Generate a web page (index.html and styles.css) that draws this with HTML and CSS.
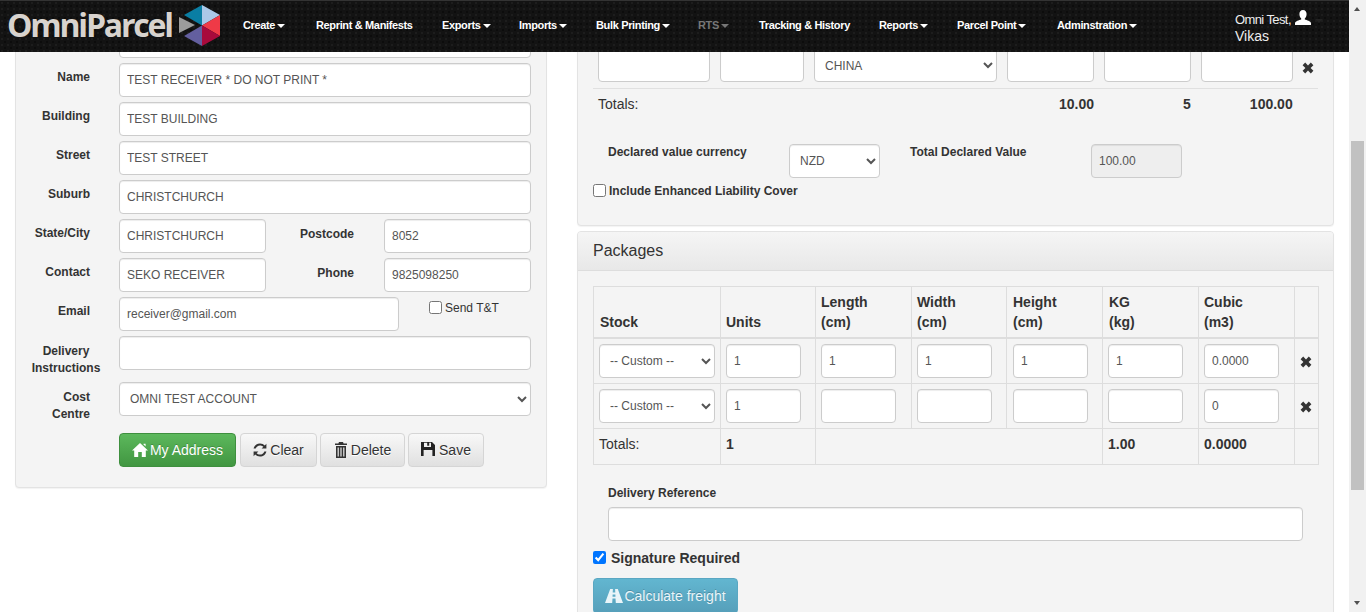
FILE: index.html
```html
<!DOCTYPE html>
<html lang="en">
<head>
<meta charset="utf-8">
<title>OmniParcel</title>
<link rel="stylesheet" href="styles.css">
</head>
<body>
<svg class="defs" width="0" height="0">
  <defs>
    <symbol id="i-home" viewBox="0 0 16 14"><path d="M8 0 L16 7.6 L13.8 7.6 L13.8 14 L9.8 14 L9.8 9 L6.2 9 L6.2 14 L2.2 14 L2.2 7.6 L0 7.6 Z M11.5 0.8 H13.6 V3.4 L11.5 1.6 Z"/></symbol>
    <symbol id="i-refresh" viewBox="0 0 14 14"><path d="M7 0.4 C9 0.4 10.6 1.2 11.8 2.4 L13.4 0.8 V5.6 H8.6 L10.4 3.8 C9.6 3 8.4 2.4 7 2.4 C5 2.4 3.2 3.8 2.7 5.6 H0.6 C1.2 2.6 3.8 0.4 7 0.4 Z M0.6 8.4 H5.4 L3.6 10.2 C4.4 11 5.6 11.6 7 11.6 C9 11.6 10.8 10.2 11.3 8.4 H13.4 C12.8 11.4 10.2 13.6 7 13.6 C5 13.6 3.4 12.8 2.2 11.6 L0.6 13.2 Z"/></symbol>
    <symbol id="i-trash" viewBox="0 0 14 16"><path d="M5 0 H9 L9.6 1.4 H13 V3 H1 V1.4 H4.4 Z M2 4 H12 V16 H2 Z M3.6 5.4 V14.6 H4.8 V5.4 Z M6.4 5.4 V14.6 H7.6 V5.4 Z M9.2 5.4 V14.6 H10.4 V5.4 Z" fill-rule="evenodd"/></symbol>
    <symbol id="i-save" viewBox="0 0 14 14"><path d="M0 0 H11 L14 3 V14 H0 Z M3 0.8 V5 H10 V0.8 H8.2 V3.8 H6.2 V0.8 Z M2.6 8 V14 H11.4 V8 Z" fill-rule="evenodd"/></symbol>
    <symbol id="i-road" viewBox="0 0 18 14"><path d="M5.2 0 H7.9 L7.7 3.6 H10.3 L10.1 0 H12.8 L18 14 H10.8 L10.5 9.4 H7.5 L7.2 14 H0 Z M7.6 5.4 L7.55 7.8 H10.45 L10.4 5.4 Z" fill-rule="evenodd"/></symbol>
    <symbol id="i-user" viewBox="0 0 16 15"><path d="M8 0 C10.4 0 11.6 1.8 11.6 4 C11.6 6 10.8 7.6 9.8 8.6 V9.6 C12 10.4 15.4 11 16 13 V15 H0 V13 C0.6 11 4 10.4 6.2 9.6 V8.6 C5.2 7.6 4.4 6 4.4 4 C4.4 1.8 5.6 0 8 0 Z"/></symbol>
    <symbol id="i-x" viewBox="0 0 12 12"><path d="M3.2 0.6 L6 3.4 L8.8 0.6 L11.4 3.2 L8.6 6 L11.4 8.8 L8.8 11.4 L6 8.6 L3.2 11.4 L0.6 8.8 L3.4 6 L0.6 3.2 Z"/></symbol>
  </defs>
</svg>

<header class="topbar">
  <a class="brand">
    <span class="brand-text">OmniParcel</span>
    <svg class="brand-mark" width="43" height="41" viewBox="0 0 43 41">
      <polygon points="24,0 42,10 24,20.500" fill="#aac8e8"/>
      <polygon points="24,0 6,10 24,20.500" fill="#0a7ea4"/>
      <polygon points="42,10 42,31 24,20.500" fill="#ef3a47"/>
      <polygon points="42,31 24,41 24,20.500" fill="#a80a3c"/>
      <polygon points="24,41 6,31 24,20.500" fill="#635f9f"/>
      <polygon points="1,12 1,28 17,20" fill="#9c9c9c"/>
    </svg>
  </a>
  <nav class="nav">
    <a class="nav-item nav-create">Create<i class="caret"></i></a>
    <a class="nav-item nav-reprint">Reprint &amp; Manifests</a>
    <a class="nav-item nav-exports">Exports<i class="caret"></i></a>
    <a class="nav-item nav-imports">Imports<i class="caret"></i></a>
    <a class="nav-item nav-bulk">Bulk Printing<i class="caret"></i></a>
    <a class="nav-item nav-rts is-muted">RTS<i class="caret"></i></a>
    <a class="nav-item nav-track">Tracking &amp; History</a>
    <a class="nav-item nav-reports">Reports<i class="caret"></i></a>
    <a class="nav-item nav-parcel">Parcel Point<i class="caret"></i></a>
    <a class="nav-item nav-admin">Adminstration<i class="caret"></i></a>
  </nav>
  <div class="user"><span class="user-org">Omni Test,</span> <svg class="ico ico-user"><use href="#i-user"/></svg><i class="caret caret-dark"></i><br>Vikas</div>
</header>

<main class="page">
  <section class="col-left">
    <div class="panel panel-address">
      <div class="row"><label class="lbl"></label><input class="ctl ctl-full" type="text"></div>
      <div class="row"><label class="lbl">Name</label><input class="ctl ctl-full" type="text" value="TEST RECEIVER * DO NOT PRINT *"></div>
      <div class="row"><label class="lbl">Building</label><input class="ctl ctl-full" type="text" value="TEST BUILDING"></div>
      <div class="row"><label class="lbl">Street</label><input class="ctl ctl-full" type="text" value="TEST STREET"></div>
      <div class="row"><label class="lbl">Suburb</label><input class="ctl ctl-full" type="text" value="CHRISTCHURCH"></div>
      <div class="row"><label class="lbl">State/City</label><input class="ctl ctl-half" type="text" value="CHRISTCHURCH"><label class="lbl lbl-mid">Postcode</label><input class="ctl ctl-half" type="text" value="8052"></div>
      <div class="row"><label class="lbl">Contact</label><input class="ctl ctl-half" type="text" value="SEKO RECEIVER"><label class="lbl lbl-mid">Phone</label><input class="ctl ctl-half" type="text" value="9825098250"></div>
      <div class="row row-email"><label class="lbl">Email</label><input class="ctl ctl-email" type="text" value="receiver@gmail.com"><label class="send"><input class="check" type="checkbox">Send T&amp;T</label></div>
      <div class="row row-instr"><label class="lbl lbl-center">Delivery Instructions</label><input class="ctl ctl-full" type="text"></div>
      <div class="row row-cost"><label class="lbl lbl-cost">Cost<br>Centre</label><select class="ctl ctl-full ctl-select"><option>OMNI TEST ACCOUNT</option></select></div>
      <div class="actions">
        <button class="btn btn-green btn-myaddr" type="button"><svg class="ico ico-home"><use href="#i-home"/></svg>My Address</button>
        <button class="btn btn-plain btn-clear" type="button"><svg class="ico ico-refresh"><use href="#i-refresh"/></svg>Clear</button>
        <button class="btn btn-plain btn-delete" type="button"><svg class="ico ico-trash"><use href="#i-trash"/></svg>Delete</button>
        <button class="btn btn-plain btn-save" type="button"><svg class="ico ico-save"><use href="#i-save"/></svg>Save</button>
      </div>
    </div>
  </section>

  <section class="col-right">
    <div class="panel panel-goods">
      <div class="goods-row">
        <input class="ctl g1" type="text">
        <input class="ctl g2" type="text">
        <select class="ctl ctl-select g3"><option>CHINA</option></select>
        <input class="ctl g4" type="text">
        <input class="ctl g5" type="text">
        <input class="ctl g6" type="text">
        <svg class="ico ico-x"><use href="#i-x"/></svg>
      </div>
      <div class="goods-totals">
        <span class="gt-label">Totals:</span>
        <b class="gt-a">10.00</b>
        <b class="gt-b">5</b>
        <b class="gt-c">100.00</b>
      </div>
      <div class="declared">
        <label class="lbl-plain dv-label">Declared value currency</label>
        <select class="ctl ctl-select dv-select"><option>NZD</option></select>
        <label class="lbl-plain dv-total">Total Declared Value</label>
        <input class="ctl dv-input" type="text" value="100.00" disabled>
      </div>
      <label class="cover"><input class="check" type="checkbox">Include Enhanced Liability Cover</label>
    </div>

    <div class="panel panel-packages">
      <h2 class="panel-title">Packages</h2>
      <div class="panel-body">
        <table class="pkg">
          <colgroup>
            <col class="c-stock"><col class="c-95"><col class="c-96"><col class="c-95"><col class="c-96"><col class="c-96"><col class="c-96"><col class="c-x">
          </colgroup>
          <thead>
            <tr><th>Stock</th><th>Units</th><th>Length<br>(cm)</th><th>Width<br>(cm)</th><th class="th-height">Height<br>(cm)</th><th class="th-kg">KG<br>(kg)</th><th>Cubic<br>(m3)</th><th></th></tr>
          </thead>
          <tbody>
            <tr>
              <td><select class="ctl ctl-select cell-select"><option>-- Custom --</option></select></td>
              <td><input class="ctl cell-input" type="text" value="1"></td>
              <td><input class="ctl cell-input" type="text" value="1"></td>
              <td><input class="ctl cell-input" type="text" value="1"></td>
              <td class="td-height"><input class="ctl cell-input" type="text" value="1"></td>
              <td><input class="ctl cell-input" type="text" value="1"></td>
              <td><input class="ctl cell-input" type="text" value="0.0000"></td>
              <td class="cell-x"><svg class="ico ico-x"><use href="#i-x"/></svg></td>
            </tr>
            <tr>
              <td><select class="ctl ctl-select cell-select"><option>-- Custom --</option></select></td>
              <td><input class="ctl cell-input" type="text" value="1"></td>
              <td><input class="ctl cell-input" type="text"></td>
              <td><input class="ctl cell-input" type="text"></td>
              <td class="td-height"><input class="ctl cell-input" type="text"></td>
              <td><input class="ctl cell-input" type="text"></td>
              <td><input class="ctl cell-input" type="text" value="0"></td>
              <td class="cell-x"><svg class="ico ico-x"><use href="#i-x"/></svg></td>
            </tr>
            <tr class="totals">
              <td>Totals:</td><td><b>1</b></td><td colspan="3"></td><td><b>1.00</b></td><td><b>0.0000</b></td><td></td>
            </tr>
          </tbody>
        </table>
        <div class="ref">
          <label class="lbl-plain ref-label">Delivery Reference</label>
          <input class="ctl ref-input" type="text">
        </div>
        <label class="sig"><input class="check" type="checkbox" checked>Signature Required</label>
        <button class="btn btn-info" type="button"><svg class="ico ico-road"><use href="#i-road"/></svg>Calculate freight</button>
      </div>
    </div>
  </section>
</main>

<div class="scrollbar">
  <i class="sb-up"></i>
  <i class="sb-thumb"></i>
  <i class="sb-down"></i>
</div>
</body>
</html>
```
FILE: styles.css
```css
* { box-sizing: border-box; }
html, body { margin: 0; height: 100%; overflow: hidden; }
body {
  font-family: "Liberation Sans", Arial, sans-serif;
  font-size: 14px;
  line-height: 20px;
  color: #333;
  background: #fff;
}
.defs { position: absolute; }

/* top bar */
.topbar {
  position: fixed;
  left: 0; top: 0;
  width: 1349px;
  height: 52px;
  z-index: 5;
  background-color: #131313;
  background-image:
    radial-gradient(circle at 2px 2px, #1d1d1d 1px, transparent 1.4px),
    radial-gradient(circle at 5px 5px, #0c0c0c 1.2px, transparent 1.6px);
  background-size: 6px 6px;
  border-top: 1px solid #333;
  display: flex;
  align-items: flex-start;
}
.brand { display: flex; align-items: flex-start; width: 243px; height: 51px; padding-left: 7px; flex: none; }
.brand-text {
  font-family: "Open Sans", sans-serif;
  font-weight: 700;
  font-size: 32px;
  line-height: 47px;
  color: #d8d3ce;
  letter-spacing: -2.2px;
  width: 171px;
  flex: none;
  white-space: nowrap;
}
.brand-mark { flex: none; margin-top: 4px; }
.nav { display: flex; height: 47px; align-items: center; flex: none; width: 992px; }
.nav-item {
  font-size: 11px;
  font-weight: 700;
  letter-spacing: -.35px;
  color: #fff;
  white-space: nowrap;
  flex: none;
}
.nav-create { width: 73px; }
.nav-reprint { width: 126px; }
.nav-exports { width: 77px; }
.nav-imports { width: 77px; }
.nav-bulk { width: 102px; }
.nav-rts { width: 61px; }
.nav-track { width: 120px; }
.nav-reports { width: 78px; }
.nav-parcel { width: 100px; }
.is-muted { color: #777; }
.caret {
  display: inline-block;
  width: 0; height: 0;
  margin-left: 2px;
  vertical-align: 1px;
  border-top: 4px solid currentColor;
  border-left: 4px solid transparent;
  border-right: 4px solid transparent;
}
.caret-dark { color: #222; margin-left: 4px; }
.user { color: #eee; font-size: 14px; line-height: 16px; padding-top: 10px; white-space: nowrap; }
.user-org { font-size: 13px; letter-spacing: -.6px; }
.ico-user { width: 16px; height: 15px; fill: #fff; vertical-align: -1px; margin-top: -6px; }
.ico { display: inline-block; }

/* page */
.page { display: flex; align-items: flex-start; width: 1349px; height: 612px; overflow: hidden; padding-left: 15px; }
.col-left { width: 532px; flex: none; }
.col-right { width: 757px; flex: none; margin-left: 30px; }
.panel {
  background: #f4f4f4;
  border: 1px solid #e3e3e3;
  border-radius: 4px;
  box-shadow: 0 1px 1px rgba(0,0,0,.05);
}

/* address form */
.panel-address { height: 488px; padding: 23px 15px 0 0; }
.row { display: flex; align-items: flex-start; margin-bottom: 5px; height: 34px; }
.lbl {
  width: 74px;
  margin-right: 29px;
  flex: none;
  text-align: right;
  font-size: 12px;
  font-weight: 700;
  line-height: 17px;
  padding-top: 6px;
}
.lbl-mid { width: 88px; margin-right: 30px; padding-top: 7px; }
.ctl {
  height: 34px;
  padding: 5px 7px 6px;
  border: 1px solid #ccc;
  border-radius: 4px;
  background: #fff;
  color: #555;
  font-family: "Liberation Sans", Arial, sans-serif;
  font-size: 12px;
  line-height: 20px;
  box-shadow: inset 0 1px 1px rgba(0,0,0,.075);
  outline: none;
  display: block;
}
.ctl-full { width: 412px; }
.ctl-half { width: 147px; flex: none; }
.ctl-email { width: 280px; flex: none; }
select.ctl { padding: 6px 6px; }
.ctl[disabled] { background: #eee; }
.row-email { margin-bottom: 5px; }
.send { display: flex; align-items: center; margin-left: 30px; font-size: 12px; line-height: 17px; padding-top: 3px; white-space: nowrap; }
.check { margin: 0 3px 0 0; width: 13px; height: 13px; flex: none; accent-color: #0075ff; }
.send .check { margin-top: -3px; }
.row-instr { margin-bottom: 12px; }
.lbl.lbl-center { text-align: center; width: 70px; margin-left: 15px; margin-right: 18px; padding-top: 7px; }
.lbl.lbl-cost { padding-top: 7px; }
.row-cost { margin-bottom: 17px; }
.actions { display: flex; margin-left: 103px; }
.btn {
  height: 34px;
  border-radius: 4px;
  font-family: "Liberation Sans", Arial, sans-serif;
  font-size: 14px;
  line-height: 20px;
  padding: 0;
  border: 1px solid #ccc;
  white-space: nowrap;
  display: flex;
  align-items: center;
  justify-content: center;
  flex: none;
}
.btn-green {
  width: 117px;
  color: #fff;
  background: linear-gradient(#5cb85c, #419641);
  border-color: #3e8f3e;
  text-shadow: 0 -1px 0 rgba(0,0,0,.2);
}
.btn-plain {
  color: #333;
  background: linear-gradient(#f8f8f8, #e0e0e0);
  border-color: #d5d5d5;
  text-shadow: 0 1px 0 #fff;
}
.btn-myaddr { margin-right: 4px; }
.btn-clear { width: 77px; margin-right: 3px; }
.btn-delete { width: 85px; margin-right: 3px; }
.btn-save { width: 76px; }
.ico-home { width: 16px; height: 14px; fill: #fff; margin-right: 2px; }
.ico-refresh { width: 14px; height: 14px; fill: #333; margin-right: 3px; }
.ico-trash { width: 14px; height: 16px; fill: #333; margin-right: 3px; }
.ico-save { width: 14px; height: 14px; fill: #222; margin-right: 4px; margin-top: -2px; }

/* goods panel */
.panel-goods { height: 226px; padding: 47px 15px 0 20px; }
.goods-row { display: flex; align-items: flex-start; border-bottom: 1px solid #e0e0e0; height: 41px; margin-left: -5px; padding-left: 5px; }
.g1 { width: 112px; margin-right: 10px; }
.g2 { width: 84px; margin-right: 10px; }
select.g3 { width: 183px; margin-right: 10px; padding-top: 8px; padding-bottom: 6px; }
.g4 { width: 87px; margin-right: 10px; }
.g5 { width: 87px; margin-right: 10px; }
.g6 { width: 92px; }
.ico-x { width: 12px; height: 12px; fill: #333; }
.goods-row .ico-x { margin: 14px 0 0 9px; }
.goods-totals { display: flex; height: 55px; padding-top: 5px; }
.gt-label { width: 0; white-space: nowrap; }
.gt-a { margin-left: 461px; }
.gt-b { margin-left: 89px; }
.gt-c { margin-left: 59px; }
.declared { display: flex; align-items: flex-start; margin-left: 10px; height: 34px; }
.lbl-plain { font-size: 12px; font-weight: 700; line-height: 17px; }
.dv-label { width: 181px; flex: none; }
.dv-select { width: 91px; flex: none; }
.dv-total { width: 181px; flex: none; margin-left: 30px; }
.dv-input { width: 91px; flex: none; }
.cover { display: flex; align-items: center; font-size: 12px; font-weight: 700; line-height: 17px; margin: 5px 0 0 -5px; white-space: nowrap; }
.cover .check { margin-top: -2px; }

/* packages panel */
.panel-packages { margin-top: 5px; height: 500px; }
.panel-title {
  margin: 0;
  height: 39px;
  padding: 9px 15px;
  font-size: 16px;
  font-weight: 400;
  line-height: 20px;
  color: #333;
  background: linear-gradient(#f5f5f5, #e8e8e8);
  border-bottom: 1px solid #ddd;
  border-radius: 3px 3px 0 0;
}
.panel-body { padding: 15px 15px 0; }
.pkg { border-collapse: collapse; table-layout: fixed; width: 725px; }
.c-stock { width: 127px; }
.c-95 { width: 95px; }
.c-96 { width: 96px; }
.c-x { width: 24px; }
.pkg th, .pkg td { border: 1px solid #ddd; padding: 5px; vertical-align: middle; text-align: left; }
.pkg th { vertical-align: bottom; border-bottom-width: 2px; font-size: 14px; line-height: 20px; height: 51px; }
.pkg th:first-child, .pkg .th-height, .pkg .th-kg { padding-left: 6px; }
.pkg td { height: 45px; }
.pkg .td-height { padding-left: 6px; }
.cell-select { width: 116px; }
.cell-input { width: 75px; }
.pkg .cell-x { text-align: center; padding: 0 2px 0 0; }
.cell-x .ico-x { display: block; margin: 2px auto 0; }
.pkg .totals td { height: 36px; padding: 2px 5px 8px; }
.ref { margin: 20px 0 0 15px; }
.ref-label { display: block; height: 22px; }
.ref-input { width: 695px; }
.sig { display: flex; align-items: center; font-size: 14px; font-weight: 700; margin-top: 7px; height: 20px; }
.sig .check { margin-right: 5px; margin-top: -1px; }
.btn-info {
  width: 145px;
  margin-top: 10px;
  height: 36px;
  color: #eaf5f9;
  background: linear-gradient(#62b6d0, #569fba);
  border-color: #5aa7c2;
  text-shadow: 0 -1px 0 rgba(0,0,0,.2);
}
.ico-road { width: 18px; height: 14px; fill: #eaf5f9; margin-right: 1px; }

/* scrollbar */
.scrollbar { position: fixed; right: 0; top: 0; width: 17px; height: 612px; background: #f1f1f1; }
.sb-up, .sb-down {
  position: absolute; left: 5px;
  border-left: 3.5px solid transparent;
  border-right: 3.5px solid transparent;
}
.sb-up { top: 7px; border-bottom: 4px solid #505050; }
.sb-down { top: 601px; border-top: 4px solid #505050; }
.sb-thumb { position: absolute; left: 2px; top: 141px; width: 13px; height: 349px; background: #c1c1c1; }
```
